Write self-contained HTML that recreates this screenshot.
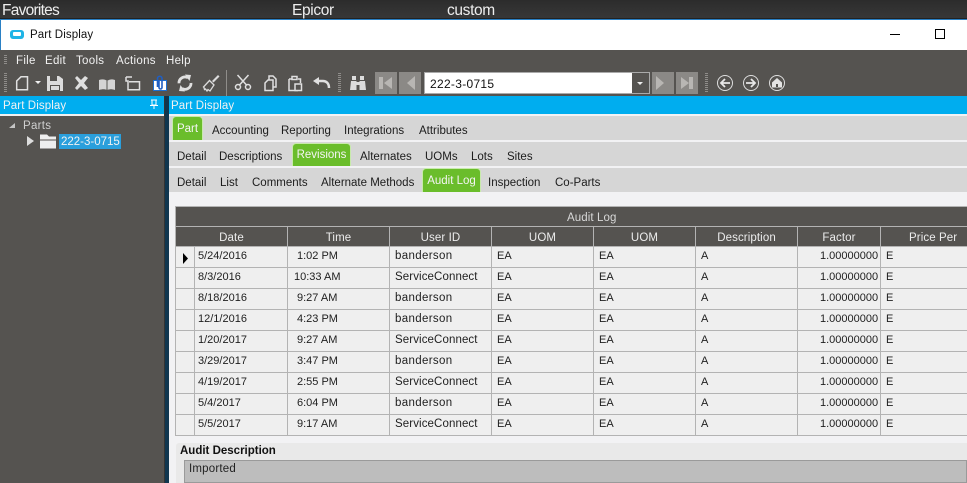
<!DOCTYPE html>
<html><head><meta charset="utf-8">
<style>
html,body{margin:0;padding:0;background:#555350}
#p{position:relative;width:967px;height:483px;overflow:hidden;font:11px "Liberation Sans",sans-serif;background:#555350}
#p div,#p span.t{position:absolute}
.t{white-space:nowrap;line-height:14px;font-size:11.5px;padding-top:1px}
.m{letter-spacing:.3px}
.w{color:#f2f2f2}.k{color:#1c1c1c}
.r{background:#d6d6d6;left:169px;width:798px}
.g{background:#6abd2b;border:1px solid #c8eaac;border-bottom:0;border-radius:4px 4px 0 0;color:#f4f4f4;text-align:center;box-sizing:border-box;font-size:11.5px;padding-top:1px}
.hl{background:#b3b3b3}
.hd{color:#ececec;top:231px;text-align:center;line-height:14px;font-size:11.5px;letter-spacing:.1px}
.c{color:#1e1e1e;line-height:14px;white-space:nowrap;padding-top:1px}
.b{font-size:11.5px;letter-spacing:.35px}.s{font-size:11.5px;letter-spacing:.1px}
svg{position:absolute}
</style></head><body><div id="p">
<div style="left:0;top:0;width:967px;height:19px;background:linear-gradient(#2c2c2c,#383838)"></div>
<div style="left:0;top:18px;width:967px;height:1px;background:#222"></div>
<div style="left:0;top:19px;width:967px;height:1px;background:#2a80c4"></div>
<span class="t" style="left:2px;top:2px;font-size:15.5px;color:#eee;line-height:16px;letter-spacing:-.75px">Favorites</span>
<span class="t" style="left:292px;top:2px;font-size:15.5px;color:#eee;line-height:16px;letter-spacing:-.35px">Epicor</span>
<span class="t" style="left:447px;top:2px;font-size:15.5px;color:#eee;line-height:16px;letter-spacing:-.35px">custom</span>

<div style="left:0;top:20px;width:967px;height:30px;background:#fff"></div>
<div style="left:0;top:20px;width:1px;height:76px;background:#2a80c4"></div>
<div style="left:10px;top:30px;width:14px;height:9px;background:#1fb4e6;border-radius:3px"></div>
<div style="left:13px;top:32px;width:8px;height:4px;background:#fff;border-radius:1px"></div>
<span class="t" style="left:30px;top:27px;color:#111;letter-spacing:.1px">Part Display</span>
<div style="left:890px;top:34px;width:10px;height:1px;background:#000"></div>
<div style="left:935px;top:29px;width:10px;height:10px;border:1px solid #000;box-sizing:border-box"></div>

<div style="left:0;top:50px;width:967px;height:46px;background:#555350"></div>
<span class="t w m" style="left:16px;top:53px">File</span>
<span class="t w m" style="left:45px;top:53px">Edit</span>
<span class="t w m" style="left:76px;top:53px">Tools</span>
<span class="t w m" style="left:116px;top:53px">Actions</span>
<span class="t w m" style="left:166px;top:53px">Help</span>

<svg style="left:0;top:50px" width="967" height="46" viewBox="0 50 967 46">
<g stroke="#8f8d8a" stroke-dasharray="1 1" fill="none" stroke-width="3">
<path d="M5.500 55v10M5.500 73v19M339.500 73v19M706.500 73v19"/></g>
<path d="M226.500 70v26" stroke="#8f8d8a"/>
<g fill="none" stroke="#e0e0e0" stroke-width="1.500">
<path d="M21 76.800h6.500v13h-10.800v-8.800z"/>
<path d="M126 77v4h2v8.800h11.500v-8h-10.500M126 77h6"/>
<circle cx="238" cy="87" r="2.500"/><circle cx="248" cy="87" r="2.500"/>
<path d="M239.500 85l9-10M246.500 85l-9-10"/>
<path d="M268 80h5v10.500h-8v-7.500zM269 80v-4h4l3 3v8h-3"/>
<path d="M289 79v11.500h9M289 79h2.500M298 79h2.500v4"/>
<path d="M292 76.500h5v3h-5z"/>
<path d="M295 84h6.500v6.500h-6.500z" fill="#555350"/>
</g>
<path d="M35 81h6l-3 3z" fill="#f0f0f0"/>
<path d="M47 76h12l4 3v12h-16z" fill="#dcdcdc"/><path d="M50 76h7v5h-7zM50 85h10v6h-10z" fill="#555350"/><path d="M51 86h8v4h-8z" fill="#dcdcdc"/>
<path d="M75 78l2-2 4 4 4-4 3 2-4 5 4 5-3 2-4-4-4 4-2-2 4-5z" fill="#dedede"/>
<path d="M99 80c3-1 6-1 8 1 3-2 5-2 8-1v10c-3-1-5-1-8 0-2-1-5-1-8 0z" fill="#d4d4d4"/><path d="M107 81v9" stroke="#555350"/>
<path d="M153.500 80.500h13v10h-13z" fill="#fff" stroke="#1e6fd0"/><path d="M157.500 87v-8.500a2 2 0 0 1 4.500 0v9a1.500 1.500 0 0 1-3 0v-7" fill="none" stroke="#1f5fc4" stroke-width="1.600"/>
<g fill="none" stroke="#e0e0e0" stroke-width="2.800"><path d="M188 77.800a6 6 0 0 0-9 5.500"/><path d="M182 88.500a6 6 0 0 0 9-5.500"/></g>
<path d="M185 74.500l6 .5-1.500 6zM185 91.500l-6-.5 1.500-6z" fill="#e0e0e0"/>
<path d="M212 81l6-6 1.500 1.500-6 6z" fill="#dcdcdc"/>
<path d="M203.500 87l6-6.500 4.500 4.500-4 6-2-1.500-1 1.500-1.500-2-1 .5-.5-2z" fill="none" stroke="#dcdcdc" stroke-width="1.300"/>
<path d="M329 88c0-5-3-7-6-7h-5" fill="none" stroke="#e0e0e0" stroke-width="2.500"/><path d="M313 81l6-4v8z" fill="#e0e0e0"/>
<path d="M351 81h5.500v9h-6.500zM359.500 81h5.500l1 9h-6.500zM352 76h4v4h-4zM360 76h4v4h-4zM356 82h4v3h-4z" fill="#dcdcdc"/>
<path d="M375 72h22v22h-22zM399 72h22v22h-22zM652 72h22v22h-22zM676 72h22v22h-22z" fill="#8b8986"/>
<path d="M379 77h4v12h-4zM392 77l-8 6 8 6zM415 76l-8 7 8 7zM656 76l8 7-8 7zM681 77l8 6-8 6zM689 77h4v12h-4z" fill="#b8b6b3"/>
<g fill="none" stroke="#dedede"><circle cx="725" cy="83" r="7.500"/><circle cx="751" cy="83" r="7.500"/><circle cx="777" cy="83" r="7.500"/></g>
<g fill="none" stroke="#e8e8e8" stroke-width="1.800"><path d="M730 83h-9M725 79l-4 4 4 4M746 83h9M751 79l4 4-4 4"/></g>
<path d="M777 78l5 4.500v5h-10v-5z" fill="#e4e4e4"/><path d="M776 84h2v3h-2z" fill="#555350"/>
</svg>
<div style="left:424px;top:72px;width:226px;height:22px;background:#fff;border:1px solid #aaa;box-sizing:border-box"></div>
<div style="left:632px;top:73px;width:17px;height:20px;background:#555350"></div>
<div style="left:637px;top:82px;width:0;height:0;border:3px solid transparent;border-top:3px solid #eee"></div>
<span class="t" style="left:430px;top:76px;color:#111;font-size:12px;letter-spacing:.3px">222-3-0715</span>

<div style="left:0;top:96px;width:967px;height:18px;background:#00adef"></div>
<span class="t w" style="left:3px;top:98px;letter-spacing:.1px">Part Display</span>
<span class="t w" style="left:171px;top:98px;letter-spacing:.1px">Part Display</span>
<svg style="left:149px;top:99px" width="10" height="11"><path d="M2 1h6M3 1v5h4V1M1 6.500h8M5 7v3" stroke="#fff" fill="none"/></svg>

<div style="left:0;top:114px;width:164px;height:369px;background:#555350;border-top:2px solid #f0f0f0;box-sizing:border-box"></div>
<div style="left:164px;top:96px;width:5px;height:387px;background:#10364f"></div>
<div style="left:164px;top:96px;width:1px;height:387px;background:#333"></div>
<svg style="left:0;top:116px" width="60" height="40"><path d="M9 12l6-5v5z" fill="#c4c4c4"/><path d="M27 20l7 5-7 5z" fill="#ddd"/><path d="M40 19h7l2 2h7v3h-16zM40 25h16v8h-16z" fill="#eee" transform="translate(0 -.5)"/></svg>
<span class="t" style="left:23px;top:118px;color:#cfcfcf;letter-spacing:.3px">Parts</span>
<div style="left:59px;top:134px;width:62px;height:15px;background:#2a9fdc"></div>
<span class="t w" style="left:61px;top:134px">222-3-0715</span>

<div style="left:169px;top:114px;width:798px;height:369px;background:#f2f2f4"></div>
<div class="r" style="top:116px;height:24px"></div>
<div class="r" style="top:142px;height:24px"></div>
<div class="r" style="top:168px;height:24px"></div>

<div class="g" style="left:172px;top:116px;width:31px;height:24px;line-height:22px">Part</div>
<span class="t k" style="left:212px;top:123px">Accounting</span>
<span class="t k" style="left:281px;top:123px">Reporting</span>
<span class="t k" style="left:344px;top:123px">Integrations</span>
<span class="t k" style="left:419px;top:123px">Attributes</span>

<span class="t k" style="left:177px;top:149px">Detail</span>
<span class="t k" style="left:219px;top:149px">Descriptions</span>
<div class="g" style="left:292px;top:143px;width:59px;height:23px;line-height:21px">Revisions</div>
<span class="t k" style="left:360px;top:149px">Alternates</span>
<span class="t k" style="left:425px;top:149px">UOMs</span>
<span class="t k" style="left:471px;top:149px">Lots</span>
<span class="t k" style="left:507px;top:149px">Sites</span>

<span class="t k" style="left:177px;top:175px">Detail</span>
<span class="t k" style="left:220px;top:175px">List</span>
<span class="t k" style="left:252px;top:175px">Comments</span>
<span class="t k" style="left:321px;top:175px">Alternate Methods</span>
<div class="g" style="left:422px;top:168px;width:59px;height:24px;line-height:22px">Audit Log</div>
<span class="t k" style="left:488px;top:175px">Inspection</span>
<span class="t k" style="left:555px;top:175px">Co-Parts</span>

<div style="left:175px;top:206px;width:792px;height:230px;background:#efefef"></div>
<div style="left:175px;top:206px;width:792px;height:41px;background:#555350"></div>
<div class="hl" style="left:175px;top:206px;width:792px;height:1px"></div>
<div class="hl" style="left:175px;top:226px;width:792px;height:1px"></div>
<div class="hl" style="left:175px;top:246px;width:792px;height:1px"></div>
<div class="hl" style="left:175px;top:267px;width:792px;height:1px"></div>
<div class="hl" style="left:175px;top:288px;width:792px;height:1px"></div>
<div class="hl" style="left:175px;top:309px;width:792px;height:1px"></div>
<div class="hl" style="left:175px;top:330px;width:792px;height:1px"></div>
<div class="hl" style="left:175px;top:351px;width:792px;height:1px"></div>
<div class="hl" style="left:175px;top:372px;width:792px;height:1px"></div>
<div class="hl" style="left:175px;top:393px;width:792px;height:1px"></div>
<div class="hl" style="left:175px;top:414px;width:792px;height:1px"></div>
<div class="hl" style="left:175px;top:435px;width:792px;height:1px"></div>
<div class="hl" style="left:175px;top:206px;width:1px;height:230px"></div>
<div class="hl" style="left:194px;top:246px;width:1px;height:190px"></div>
<div class="hl" style="left:287px;top:226px;width:1px;height:210px"></div>
<div class="hl" style="left:389px;top:226px;width:1px;height:210px"></div>
<div class="hl" style="left:491px;top:226px;width:1px;height:210px"></div>
<div class="hl" style="left:593px;top:226px;width:1px;height:210px"></div>
<div class="hl" style="left:695px;top:226px;width:1px;height:210px"></div>
<div class="hl" style="left:797px;top:226px;width:1px;height:210px"></div>
<div class="hl" style="left:880px;top:226px;width:1px;height:210px"></div>

<span class="t" style="left:567px;top:210px;color:#d8d8d8;letter-spacing:.1px">Audit Log</span>
<div class="hd" style="left:176px;width:111px">Date</div>
<div class="hd" style="left:288px;width:101px">Time</div>
<div class="hd" style="left:390px;width:101px">User ID</div>
<div class="hd" style="left:492px;width:101px">UOM</div>
<div class="hd" style="left:594px;width:101px">UOM</div>
<div class="hd" style="left:696px;width:101px">Description</div>
<div class="hd" style="left:798px;width:82px">Factor</div>
<div class="hd" style="left:909px;white-space:nowrap">Price Per</div>
<svg style="left:182px;top:253px" width="7" height="11"><path d="M1 0l5 5.500-5 5.500z" fill="#000"/></svg>

<div class="c" style="left:198px;top:248px">5/24/2016</div><div class="c" style="left:297px;top:248px">1:02 PM</div><div class="c b" style="left:395px;top:248px">banderson</div><div class="c" style="left:497px;top:248px">EA</div><div class="c" style="left:599px;top:248px">EA</div><div class="c" style="left:701px;top:248px">A</div><div class="c" style="left:820px;top:248px">1.00000000</div><div class="c" style="left:886px;top:248px">E</div>
<div class="c" style="left:198px;top:269px">8/3/2016</div><div class="c" style="left:294px;top:269px">10:33 AM</div><div class="c s" style="left:395px;top:269px">ServiceConnect</div><div class="c" style="left:497px;top:269px">EA</div><div class="c" style="left:599px;top:269px">EA</div><div class="c" style="left:701px;top:269px">A</div><div class="c" style="left:820px;top:269px">1.00000000</div><div class="c" style="left:886px;top:269px">E</div>
<div class="c" style="left:198px;top:290px">8/18/2016</div><div class="c" style="left:297px;top:290px">9:27 AM</div><div class="c b" style="left:395px;top:290px">banderson</div><div class="c" style="left:497px;top:290px">EA</div><div class="c" style="left:599px;top:290px">EA</div><div class="c" style="left:701px;top:290px">A</div><div class="c" style="left:820px;top:290px">1.00000000</div><div class="c" style="left:886px;top:290px">E</div>
<div class="c" style="left:198px;top:311px">12/1/2016</div><div class="c" style="left:297px;top:311px">4:23 PM</div><div class="c b" style="left:395px;top:311px">banderson</div><div class="c" style="left:497px;top:311px">EA</div><div class="c" style="left:599px;top:311px">EA</div><div class="c" style="left:701px;top:311px">A</div><div class="c" style="left:820px;top:311px">1.00000000</div><div class="c" style="left:886px;top:311px">E</div>
<div class="c" style="left:198px;top:332px">1/20/2017</div><div class="c" style="left:297px;top:332px">9:27 AM</div><div class="c s" style="left:395px;top:332px">ServiceConnect</div><div class="c" style="left:497px;top:332px">EA</div><div class="c" style="left:599px;top:332px">EA</div><div class="c" style="left:701px;top:332px">A</div><div class="c" style="left:820px;top:332px">1.00000000</div><div class="c" style="left:886px;top:332px">E</div>
<div class="c" style="left:198px;top:353px">3/29/2017</div><div class="c" style="left:297px;top:353px">3:47 PM</div><div class="c b" style="left:395px;top:353px">banderson</div><div class="c" style="left:497px;top:353px">EA</div><div class="c" style="left:599px;top:353px">EA</div><div class="c" style="left:701px;top:353px">A</div><div class="c" style="left:820px;top:353px">1.00000000</div><div class="c" style="left:886px;top:353px">E</div>
<div class="c" style="left:198px;top:374px">4/19/2017</div><div class="c" style="left:297px;top:374px">2:55 PM</div><div class="c s" style="left:395px;top:374px">ServiceConnect</div><div class="c" style="left:497px;top:374px">EA</div><div class="c" style="left:599px;top:374px">EA</div><div class="c" style="left:701px;top:374px">A</div><div class="c" style="left:820px;top:374px">1.00000000</div><div class="c" style="left:886px;top:374px">E</div>
<div class="c" style="left:198px;top:395px">5/4/2017</div><div class="c" style="left:297px;top:395px">6:04 PM</div><div class="c b" style="left:395px;top:395px">banderson</div><div class="c" style="left:497px;top:395px">EA</div><div class="c" style="left:599px;top:395px">EA</div><div class="c" style="left:701px;top:395px">A</div><div class="c" style="left:820px;top:395px">1.00000000</div><div class="c" style="left:886px;top:395px">E</div>
<div class="c" style="left:198px;top:416px">5/5/2017</div><div class="c" style="left:297px;top:416px">9:17 AM</div><div class="c s" style="left:395px;top:416px">ServiceConnect</div><div class="c" style="left:497px;top:416px">EA</div><div class="c" style="left:599px;top:416px">EA</div><div class="c" style="left:701px;top:416px">A</div><div class="c" style="left:820px;top:416px">1.00000000</div><div class="c" style="left:886px;top:416px">E</div>

<div style="left:176px;top:443px;width:791px;height:40px;background:#e9e9e9;border-radius:3px 0 0 0"></div>
<span class="t" style="left:180px;top:443px;font-weight:bold;color:#111">Audit Description</span>
<div style="left:184px;top:460px;width:783px;height:23px;background:#bdbdbd;border:1px solid #9a9a9a;box-sizing:border-box"></div>
<span class="t" style="left:189px;top:461px;color:#222;letter-spacing:.2px">Imported</span>
</div></body></html>
